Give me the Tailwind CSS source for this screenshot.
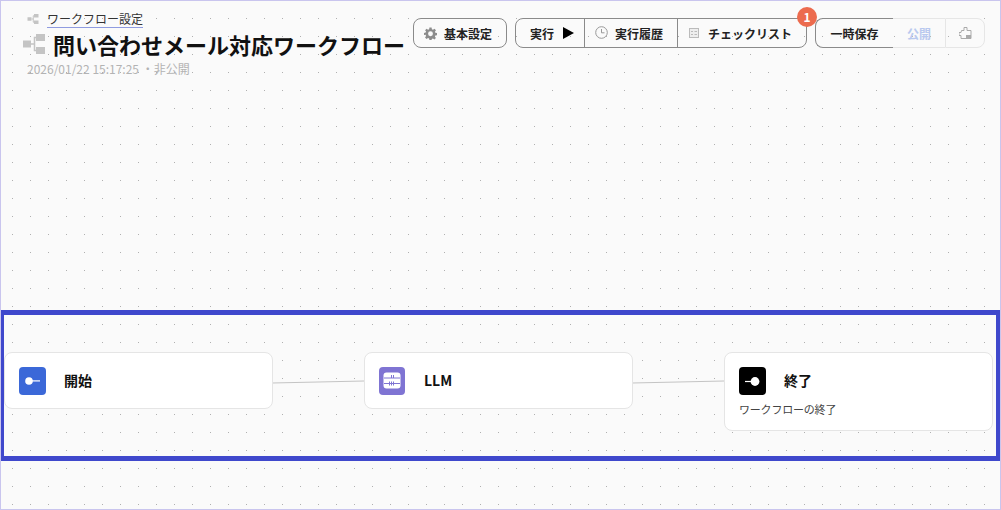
<!DOCTYPE html>
<html lang="ja">

<head>
  <meta charset="UTF-8" />
  <meta name="viewport" content="width=device-width, initial-scale=1.0" />
  <script src="https://cdn.jsdelivr.net/npm/@tailwindcss/browser@4"></script>
  <title>問い合わせメール対応ワークフロー</title>
</head>

<body class="font-['Noto_Sans_CJK_JP','Noto_Sans',sans-serif] overflow-hidden">
  <div
    class="relative w-[1001px] h-[510px] overflow-hidden border border-[#c9c5ee] bg-[#fafafa] bg-[radial-gradient(circle_at_0.5px_0.5px,#b0b0b0_0.5px,transparent_0.6px)] bg-[size:18px_18px] bg-[position:11px_17px]">

    <!-- header -->
    <header class="flex items-start justify-between pt-[8px] pl-[22px] pr-[15px]">
      <div class="flex flex-col">
        <div class="flex items-center h-[20px] pl-[4px]">
          <svg class="w-[12px] h-[10px] text-[#c4c4c4]" viewBox="0 0 22 20" fill="currentColor">
            <path d="M0 6.500h8v7H0zM13 0h9v7h-9zM13 13h9v7h-9z" />
            <path d="M8 10h3.500M13 3.500h-1.500v13H13" fill="none" stroke="currentColor" stroke-width="2" />
          </svg>
          <span class="ml-[8px] text-[12px] leading-[17px] text-[#333] border-b border-[#8f9be0]">ワークフロー設定</span>
        </div>
        <div class="flex items-center h-[30px] mt-[1px]">
          <svg class="w-[22px] h-[20px] -mt-[2px] text-[#c4c4c4]" viewBox="0 0 22 20" fill="currentColor">
            <path d="M0 6.500h8v7H0zM13 0h9v7h-9zM13 13h9v7h-9z" />
            <path d="M8 10h3.500M13 3.500h-1.500v13H13" fill="none" stroke="currentColor" stroke-width="1.500" />
          </svg>
          <h1 class="ml-[8px] text-[22px] leading-[30px] -mt-[2px] font-bold text-[#111] whitespace-nowrap">問い合わせメール対応ワークフロー</h1>
        </div>
        <div class="mt-[1px] pl-[4px] text-[12px] leading-[16px] text-[#b3b3b3]">2026/01/22 15:17:25 ・非公開</div>
      </div>

      <div class="flex items-start gap-[8px] mt-[9px] text-[12px] font-bold text-[#222]">
        <button class="flex items-center h-[30px] w-[94px] pl-[10px] rounded-[8px] border border-[#8a8a8a]">
          <svg class="w-[13px] h-[13px] text-[#8c8c8c]" viewBox="0 0 24 24" fill="currentColor">
            <path fill-rule="evenodd" d="M10 1h4l.6 3.200 2 .8L19.300 3.100l2.800 2.800L20.100 8.600l.9 2 3 .500v4l-3.100.500-.8 2 1.900 2.700-2.800 2.800-2.700-1.900-2 .8L14 24h-4l-.6-3-2-.9-2.700 1.900-2.800-2.800 1.900-2.700-.8-2L0 14.900v-4l3-.6.900-2L2 5.900l2.800-2.800 2.700 1.900 2-.8zM12 8a4.500 4.500 0 1 0 0 9 4.500 4.500 0 0 0 0-9z" />
          </svg>
          <span class="ml-[7px] mt-[1px]">基本設定</span>
        </button>

        <div class="flex h-[30px] w-[292px] rounded-[8px] border border-[#8a8a8a]">
          <button class="flex items-center w-[69px] pl-[14px] border-r border-[#8a8a8a]">
            <span class="mt-[1px]">実行</span>
            <svg class="ml-[9px] w-[11px] h-[12px] -mt-[1px] text-black" viewBox="0 0 11 12" fill="currentColor">
              <path d="M0 0l11 6-11 6z" />
            </svg>
          </button>
          <button class="flex items-center w-[93px] pl-[10px] border-r border-[#8a8a8a]">
            <svg class="w-[13px] h-[13px] -mt-[1px] text-[#999]" viewBox="0 0 13 13" fill="none" stroke="currentColor">
              <circle cx="6.500" cy="6.500" r="5.800" />
              <path d="M6.500 3v3.800h3" />
            </svg>
            <span class="ml-[7px] mt-[1px]">実行履歴</span>
          </button>
          <button class="flex items-center flex-1 pl-[11px]">
            <svg class="w-[10px] h-[10px] -mt-[1px] text-[#bbb]" viewBox="0 0 10 10" fill="none" stroke="currentColor">
              <rect x="0.500" y="0.500" width="9" height="9" fill="#eeeeee" />
              <path d="M2 3.500h2M2 6.500h2M5.500 3.500h2.500M5.500 6.500h2.500" />
            </svg>
            <span class="ml-[9px] mt-[1px]">チェックリスト</span>
          </button>
        </div>

        <div class="flex h-[30px] w-[170px] rounded-[8px]">
          <button class="w-[78px] h-full pt-[1px] rounded-l-[8px] border border-r-0 border-[#8a8a8a]">一時保存</button>
          <button class="w-[52px] h-full pt-[1px] border-y border-[#e6e6e6] text-[#b9c9ef]">公開</button>
          <button class="flex items-center justify-center flex-1 h-full rounded-r-[8px] border border-[#e6e6e6]">
            <svg class="w-[13px] h-[12px] text-[#aaa]" viewBox="0 0 13 12" fill="none" stroke="currentColor">
              <path d="M2.500 3.500h2.500V.5h3v3h4v8h-10v-3h-2v-3h2z" />
              <rect x="7" y="8" width="5" height="3.500" fill="currentColor" stroke="none" />
            </svg>
          </button>
        </div>
      </div>
    </header>

    <!-- badge -->
    <div class="absolute left-[796px] top-[6px] w-[20px] h-[20px] rounded-full bg-[#ec6b4e] flex items-center justify-center text-white text-[12px] font-bold leading-none">1</div>

    <!-- edges -->
    <svg class="absolute left-0 top-0 w-[1001px] h-[510px] pointer-events-none" viewBox="0 0 1001 510" fill="none" stroke="#c4c4c4">
      <path d="M271 382L363 380" />
      <path d="M631 382L723 380" />
    </svg>

    <!-- nodes -->
    <div class="absolute left-[3px] top-[351px] w-[269px] h-[57px] rounded-[8px] border border-[#e5e5e5] bg-white">
      <div class="flex items-center h-full pl-[14px]">
        <div class="flex items-center justify-center w-[27px] h-[28px] rounded-[4px] bg-[#3b68d8]">
          <svg class="w-[15px] h-[8px]" viewBox="0 0 15 8" fill="white">
            <circle cx="4" cy="4" r="3.800" />
            <rect x="7" y="3.300" width="8" height="1.200" />
          </svg>
        </div>
        <span class="ml-[18px] -mt-[1px] text-[14px] font-bold text-[#111]">開始</span>
      </div>
    </div>

    <div class="absolute left-[363px] top-[351px] w-[269px] h-[57px] rounded-[8px] border border-[#e5e5e5] bg-white">
      <div class="flex items-center h-full pl-[14px]">
        <div class="flex items-center justify-center w-[26px] h-[28px] rounded-[4px] bg-[#7f74d3]">
          <svg class="w-[18px] h-[17px]" viewBox="0 0 18 17" fill="none">
            <rect x="0.500" y="0.500" width="17" height="16" rx="3" fill="white" />
            <path d="M1 6h16M1 11.500h16" stroke="#7f74d3" />
            <path d="M8.500 3v3M10.500 3v3M6.500 9.500v4M8.500 9.500v4M10.500 9.500v4" stroke="#7f74d3" />
          </svg>
        </div>
        <span class="ml-[19px] -mt-[1px] text-[14px] font-bold text-[#111]">LLM</span>
      </div>
    </div>

    <div class="absolute left-[723px] top-[351px] w-[269px] h-[79px] rounded-[8px] border border-[#e5e5e5] bg-white px-[14px] pt-[14px]">
      <div class="flex items-center">
        <div class="flex items-center justify-center w-[27px] h-[28px] rounded-[4px] bg-black">
          <svg class="w-[15px] h-[9px]" viewBox="0 0 15 9" fill="white">
            <circle cx="10" cy="4.500" r="4.400" />
            <rect x="0" y="3.900" width="7" height="1.200" />
          </svg>
        </div>
        <span class="ml-[18px] -mt-[1px] text-[14px] font-bold text-[#111]">終了</span>
      </div>
      <p class="mt-[6px] text-[11px] leading-[16px] tracking-[-0.2px] text-[#444]">ワークフローの終了</p>
    </div>

    <!-- highlight -->
    <div class="absolute -left-px top-[309px] w-[1001px] h-[151px] border-y-[5px] border-l-[4px] border-r-[5px] border-[#3f48cc] pointer-events-none"></div>
  </div>
</body>

</html>
